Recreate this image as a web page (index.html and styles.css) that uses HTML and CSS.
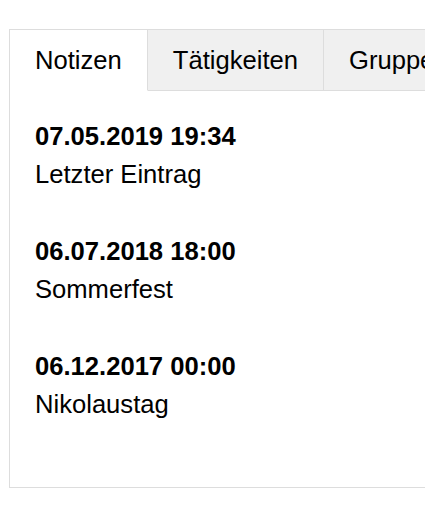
FILE: index.html
```html
<!DOCTYPE html>
<html lang="de">
<head>
<meta charset="utf-8">
<title>Notizen</title>
<link rel="stylesheet" href="styles.css">
</head>
<body>
<div class="panel">
  <div class="tabs">
    <div class="tab active">Notizen</div>
    <div class="tab">Tätigkeiten</div>
    <div class="tab">Gruppen</div>
    <div class="tab fill"></div>
  </div>
  <div class="content">
    <div class="entry">
      <div class="date">07.05.2019 19:34</div>
      <div class="title">Letzter Eintrag</div>
    </div>
    <div class="entry">
      <div class="date">06.07.2018 18:00</div>
      <div class="title">Sommerfest</div>
    </div>
    <div class="entry">
      <div class="date">06.12.2017 00:00</div>
      <div class="title">Nikolaustag</div>
    </div>
  </div>
</div>
</body>
</html>
```
FILE: styles.css
```css
html, body {
  margin: 0;
  padding: 0;
  background: #ffffff;
  overflow: hidden;
}
body {
  font-family: "Liberation Sans", Arial, sans-serif;
  font-size: 25.6px;
  line-height: 38px;
  color: #000000;
}
.panel {
  margin: 29px 0 0 9px;
  width: 560px;
  border: 1px solid #dddddd;
}
.tabs {
  display: flex;
}
.tab {
  padding: 11px 25px;
  background: #f0f0f0;
  border-right: 1px solid #dddddd;
  border-bottom: 1px solid #dddddd;
  white-space: nowrap;
}
.tab.active {
  background: #ffffff;
  border-bottom-color: #ffffff;
}
.tab.fill {
  flex: 1;
  border-right: none;
}
.content {
  padding: 26px 25px 25px;
}
.entry {
  margin-bottom: 39px;
}
.date {
  font-weight: bold;
}
```
